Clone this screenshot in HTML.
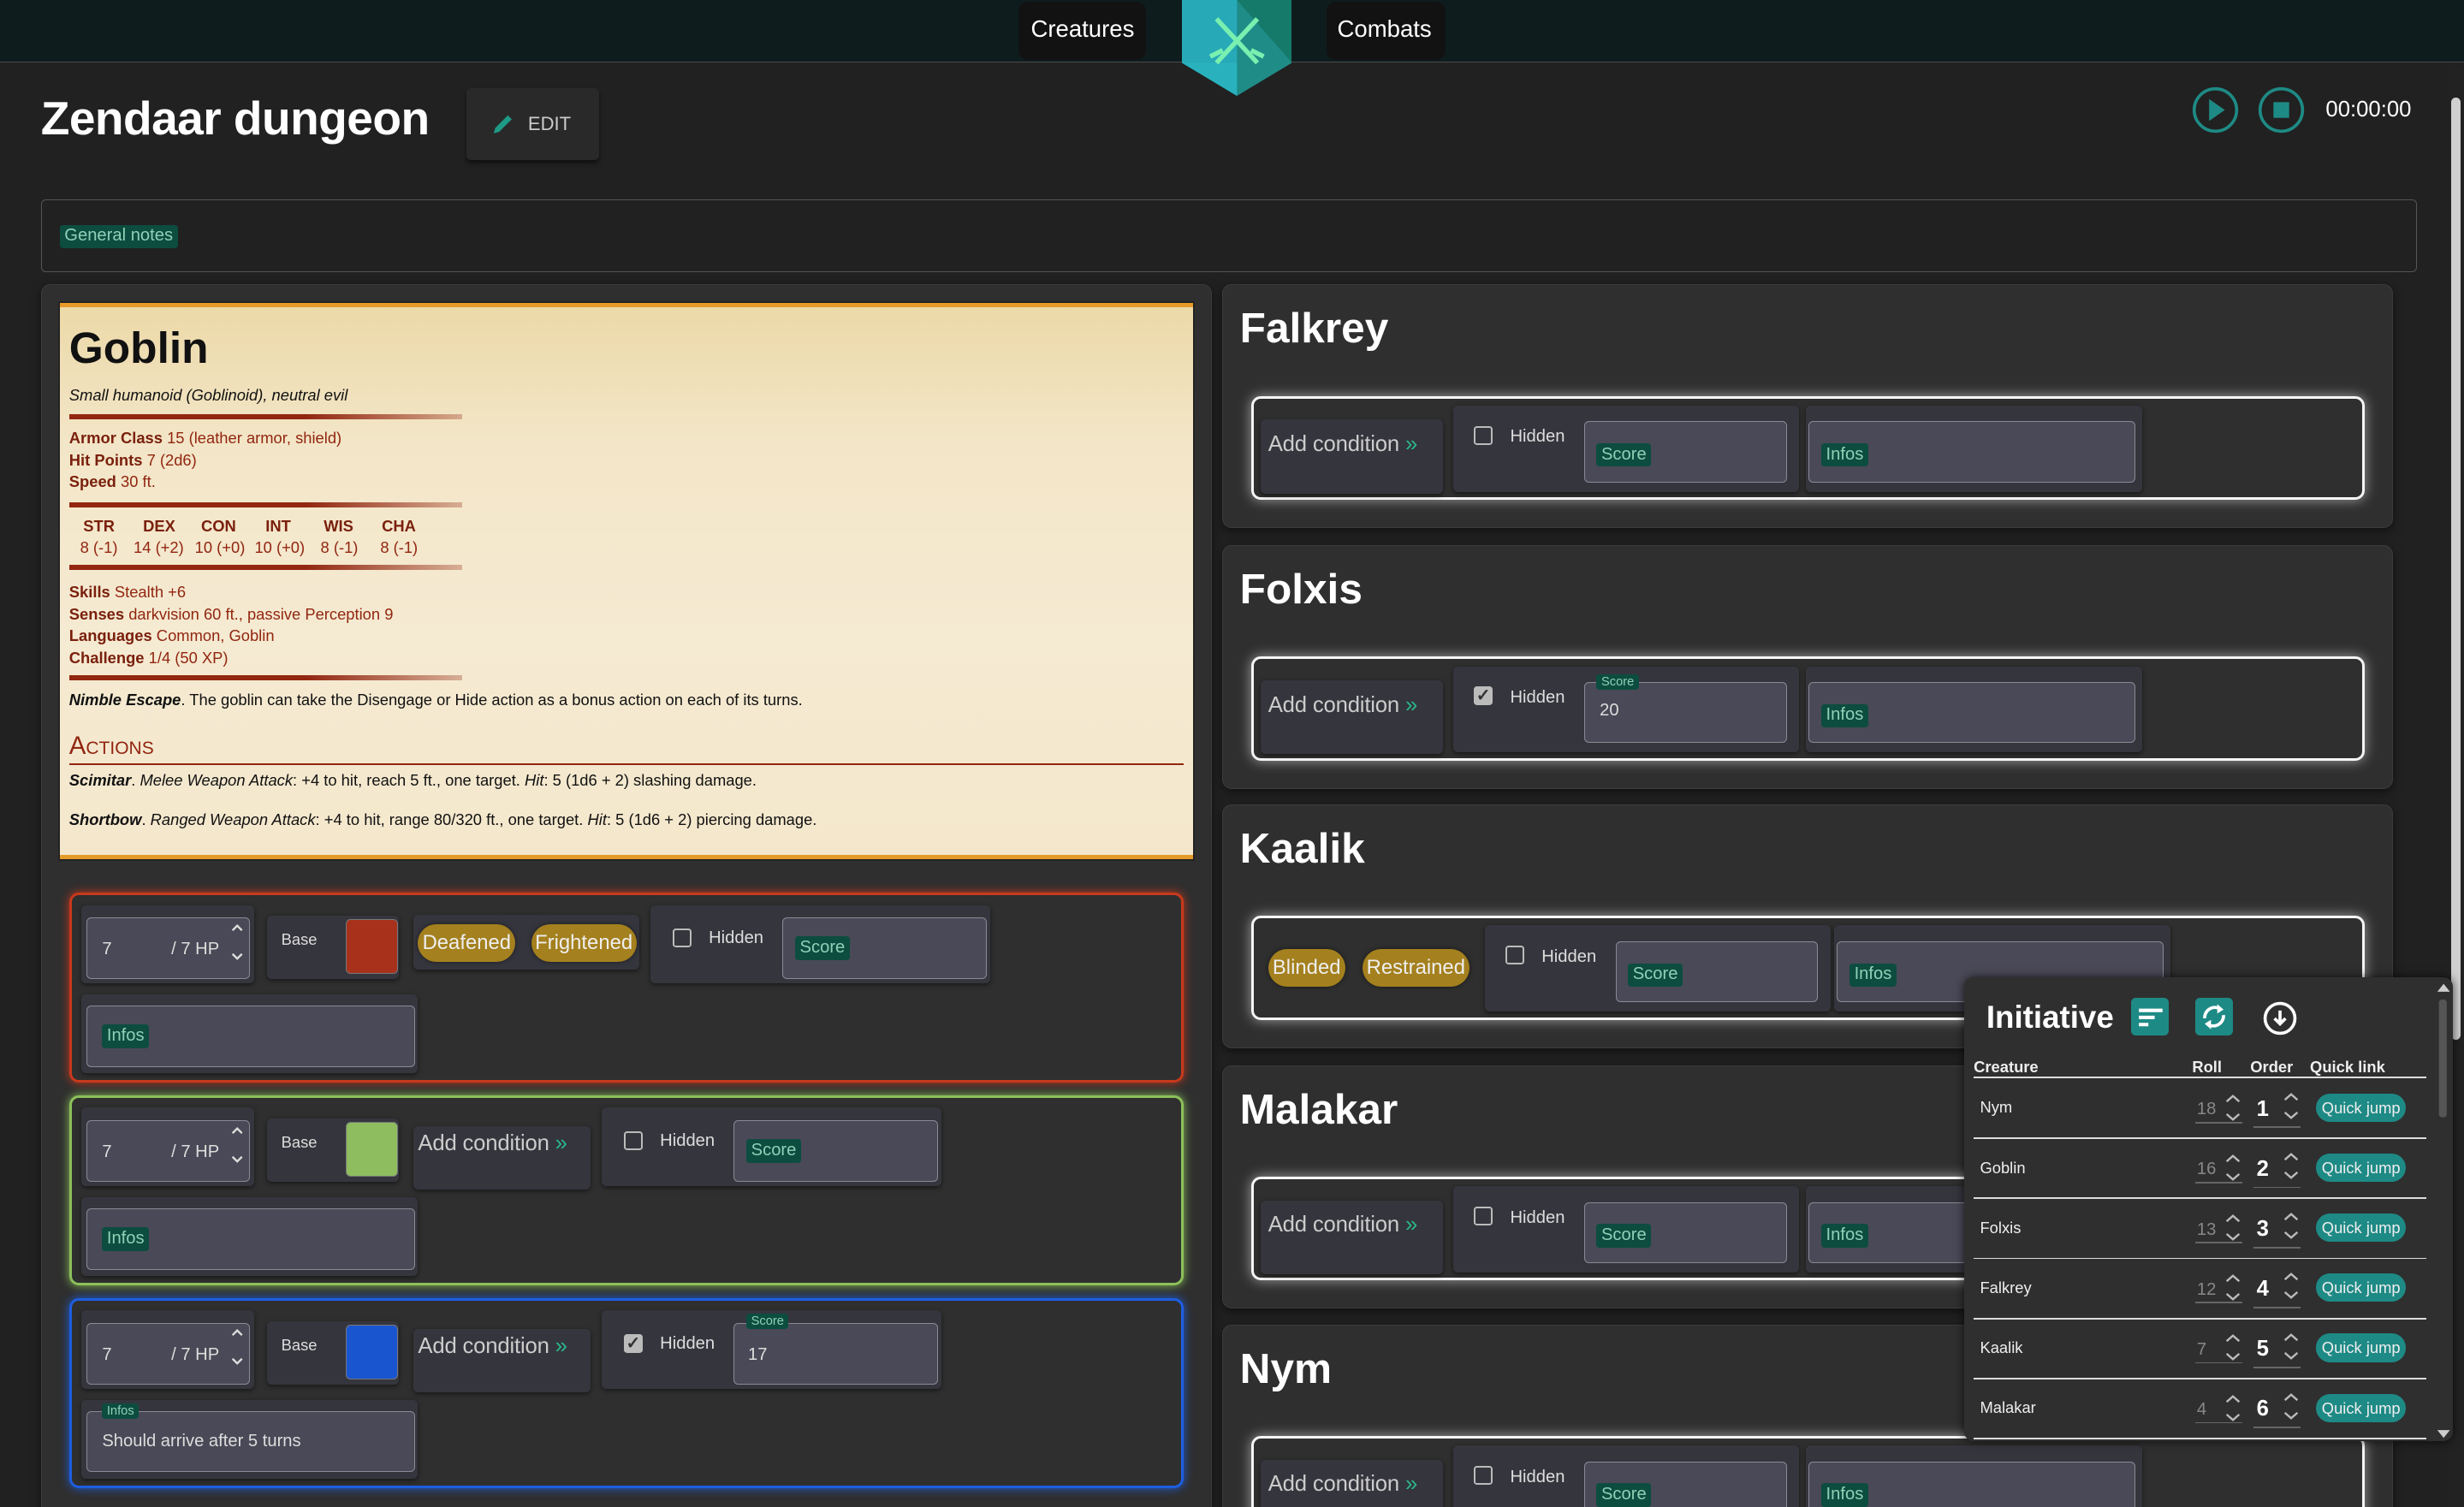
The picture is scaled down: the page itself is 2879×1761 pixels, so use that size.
<!DOCTYPE html>
<html><head><meta charset="utf-8"><style>
*{box-sizing:border-box;margin:0;padding:0}
html,body{width:2879px;height:1761px;overflow:hidden;background:#212121}
#r{position:relative;width:1568px;height:959px;zoom:1.83609;font-family:"Liberation Sans",sans-serif;color:#eee;background:#212121;overflow:hidden}
.a{position:absolute}
.panel{position:absolute;background:#2f2f2f;border:1px solid #3c3c3c;border-radius:6px;box-shadow:0 2px 6px rgba(0,0,0,.5)}
.grp{position:absolute;background:#35353d;border-radius:3px;box-shadow:0 1px 3px rgba(0,0,0,.5)}
.fld{position:absolute;background:#4a4957;border:1px solid #8a8a95;border-radius:3px}
.tag{position:absolute;background:#0c4d3f;color:#8fd0b8;font-size:11px;padding:1px 3px;border-radius:2px;line-height:13px}
.tag.s{font-size:8px;line-height:10px;padding:0 3px}
.cb{position:absolute;width:12px;height:12px;border:1.5px solid #bbb;border-radius:2px}
.cbk{position:absolute;width:12px;height:12px;background:#bbb;border-radius:2px;color:#333;font-size:11px;line-height:12px;text-align:center;font-weight:bold}
.t{position:absolute;white-space:nowrap}
.chip{position:absolute;background:#a4801e;border-radius:12px;color:#eee;font-size:13px;text-align:center;line-height:24px;height:24px;box-shadow:0 0 3px rgba(0,0,0,.5)}
.inner{position:absolute;border:2px solid #f5f5f5;border-radius:6px;box-shadow:0 0 8px rgba(255,255,255,.55)}
.st{font-size:10px;color:#922610;line-height:14px}
.st b{color:#7a200d}
.rule{position:absolute;left:6px;width:250px;height:3px;background:linear-gradient(90deg,#922610,#922610 60%,rgba(146,38,16,.3))}
.qj{position:absolute;left:1474px;width:57px;height:18px;border-radius:9px;background:#1e8a85;color:#eee;font-size:10px;text-align:center;line-height:18px}
.ac{font-size:14px;color:#ccc;font-weight:500;letter-spacing:-0.1px}
</style></head><body><div id="r">

<div class="a" style="left:0;top:0;width:1568px;height:40px;background:#0e1c1e;border-bottom:1px solid #4a4a4a"></div>
<div class="a" style="left:648px;top:1px;width:81px;height:37px;background:#121212;border-radius:6px"></div>
<div class="t" style="left:656px;top:10px;font-size:15px;color:#fff">Creatures</div>
<div class="a" style="left:844px;top:1px;width:76px;height:37px;background:#121212;border-radius:6px"></div>
<div class="t" style="left:851px;top:10px;font-size:15px;color:#fff">Combats</div>
<svg class="a" style="left:752px;top:0" width="70" height="62" viewBox="0 0 70 62">
<polygon points="0,0 70,0 70,40 35,61 0,40" fill="#1f8c88"/>
<polygon points="0,0 35,0 35,61 0,40" fill="#27a9b8"/>
<polygon points="35,0 70,0 70,40" fill="#167a6a"/>
<polygon points="0,40 35,61 35,40" fill="#2bb6c0" opacity=".7"/>
<path d="M22 12 L48 40 M48 12 L22 40 M18 36 l8 -4 M52 36 l-8 -4" stroke="#7af0b0" stroke-width="3"/>
</svg>

<div class="t" style="left:26px;top:58px;font-size:30px;font-weight:bold;color:#fff;letter-spacing:-0.3px">Zendaar dungeon</div>
<div class="a" style="left:297px;top:56px;width:84px;height:46px;background:#292929;border-radius:3px;box-shadow:0 2px 3px rgba(0,0,0,.5)"></div>
<svg class="a" style="left:313px;top:72px" width="14" height="14" viewBox="0 0 14 14"><path d="M1 13 L2 9.5 L10 1.5 L12.5 4 L4.5 12 Z" fill="#1e9a85"/></svg>
<div class="t" style="left:336px;top:72px;font-size:12px;color:#ccc">EDIT</div>
<svg class="a" style="left:1395px;top:55px" width="32" height="32"><circle cx="15" cy="15" r="13.5" fill="none" stroke="#1e8a85" stroke-width="2"/><path d="M11 8 L21 15 L11 22 Z" fill="#1e8a85"/></svg>
<svg class="a" style="left:1437px;top:55px" width="32" height="32"><circle cx="15" cy="15" r="13.5" fill="none" stroke="#1e8a85" stroke-width="2"/><rect x="10" y="10" width="10" height="10" fill="#1e8a85"/></svg>
<div class="t" style="left:1480px;top:62px;font-size:14px;color:#fff">00:00:00</div>
<div class="a" style="left:1558px;top:42px;width:10px;height:917px;background:#222"></div>
<div class="a" style="left:1560px;top:62px;width:6px;height:600px;background:#cfcfcf;border-radius:3px"></div>

<div class="a" style="left:26px;top:127px;width:1512px;height:46px;border:1px solid #555;border-radius:3px"></div>
<div class="tag" style="left:38px;top:143px">General notes</div>

<div class="panel" style="left:26px;top:181px;width:745px;height:790px"></div>
<div class="a" style="left:38px;top:193px;width:721px;height:354px;background:linear-gradient(180deg,#ecd9a8 0%,#f3e6c8 25%,#f5ead2 60%,#f4e7cc 100%);border-top:3px solid #e69a28;border-bottom:3px solid #e69a28;box-shadow:0 0 0 1px #222">
 <div class="t" style="left:6px;top:9px;font-size:28px;font-weight:bold;color:#111">Goblin</div>
 <div class="t" style="left:6px;top:50px;font-size:10px;font-style:italic;color:#111">Small humanoid (Goblinoid), neutral evil</div>
 <div class="rule" style="top:68px"></div>
 <div class="t st" style="left:6px;top:76px"><b>Armor Class</b> 15 (leather armor, shield)</div>
 <div class="t st" style="left:6px;top:90px"><b>Hit Points</b> 7 (2d6)</div>
 <div class="t st" style="left:6px;top:104px"><b>Speed</b> 30 ft.</div>
 <div class="rule" style="top:124px"></div>
 <div class="t st" style="left:15px;top:132px"><b>STR</b></div>
 <div class="t st" style="left:53px;top:132px"><b>DEX</b></div>
 <div class="t st" style="left:90px;top:132px"><b>CON</b></div>
 <div class="t st" style="left:131px;top:132px"><b>INT</b></div>
 <div class="t st" style="left:168px;top:132px"><b>WIS</b></div>
 <div class="t st" style="left:205px;top:132px"><b>CHA</b></div>
 <div class="t st" style="left:13px;top:146px">8 (-1)</div>
 <div class="t st" style="left:47px;top:146px">14 (+2)</div>
 <div class="t st" style="left:86px;top:146px">10 (+0)</div>
 <div class="t st" style="left:124px;top:146px">10 (+0)</div>
 <div class="t st" style="left:166px;top:146px">8 (-1)</div>
 <div class="t st" style="left:204px;top:146px">8 (-1)</div>
 <div class="rule" style="top:164px"></div>
 <div class="t st" style="left:6px;top:174px"><b>Skills</b> Stealth +6</div>
 <div class="t st" style="left:6px;top:188px"><b>Senses</b> darkvision 60 ft., passive Perception 9</div>
 <div class="t st" style="left:6px;top:202px"><b>Languages</b> Common, Goblin</div>
 <div class="t st" style="left:6px;top:216px"><b>Challenge</b> 1/4 (50 XP)</div>
 <div class="rule" style="top:234px"></div>
 <div class="t" style="left:6px;top:244px;font-size:10px;color:#111"><b><i>Nimble Escape</i></b>. The goblin can take the Disengage or Hide action as a bonus action on each of its turns.</div>
 <div class="t" style="left:6px;top:270px;font-size:16px;color:#922610;font-variant:small-caps">Actions</div>
 <div class="a" style="left:6px;top:290px;width:709px;height:1px;background:#922610"></div>
 <div class="t" style="left:6px;top:295px;font-size:10px;color:#111"><b><i>Scimitar</i></b>. <i>Melee Weapon Attack</i>: +4 to hit, reach 5 ft., one target. <i>Hit</i>: 5 (1d6 + 2) slashing damage.</div>
 <div class="t" style="left:6px;top:320px;font-size:10px;color:#111"><b><i>Shortbow</i></b>. <i>Ranged Weapon Attack</i>: +4 to hit, range 80/320 ft., one target. <i>Hit</i>: 5 (1d6 + 2) piercing damage.</div>
</div>

<div id="cards"></div>
<div id="right"></div>

<div class="a" style="left:1250px;top:622px;width:311px;height:295px;background:#2f2f2f;border-radius:6px;box-shadow:0 0 6px rgba(0,0,0,.7)">
 <div class="t" style="left:14px;top:14px;font-size:20px;font-weight:bold;color:#fff">Initiative</div>
 <div class="a" style="left:106px;top:13px;width:24px;height:24px;background:#1e8a85;border-radius:3px"></div>
 <svg class="a" style="left:106px;top:13px" width="24" height="24"><path d="M5 8h15M5 12.5h10M5 17h6" stroke="#fff" stroke-width="2.2"/></svg>
 <div class="a" style="left:147px;top:13px;width:24px;height:24px;background:#1e8a85;border-radius:3px"></div>
 <svg class="a" style="left:147px;top:13px" width="24" height="24" viewBox="0 0 24 24"><path d="M6 13 A6.5 6.5 0 0 1 16.5 7.5" fill="none" stroke="#fff" stroke-width="2"/><path d="M14 4 L18 7.5 L14 10 Z" fill="#fff"/><path d="M18 11 A6.5 6.5 0 0 1 7.5 16.5" fill="none" stroke="#fff" stroke-width="2"/><path d="M10 20 L6 16.5 L10 14 Z" fill="#fff"/></svg>
 <svg class="a" style="left:189px;top:14px" width="24" height="24"><circle cx="12" cy="12" r="9.5" fill="none" stroke="#fff" stroke-width="2"/><path d="M12 7v8M8.5 12l3.5 3.5 3.5-3.5" stroke="#fff" stroke-width="2" fill="none"/></svg>
 <div class="t" style="left:6px;top:51px;font-size:10px;font-weight:bold">Creature</div>
 <div class="t" style="left:145px;top:51px;font-size:10px;font-weight:bold">Roll</div>
 <div class="t" style="left:182px;top:51px;font-size:10px;font-weight:bold">Order</div>
 <div class="t" style="left:220px;top:51px;font-size:10px;font-weight:bold">Quick link</div>
 <div class="a" style="left:6px;top:63px;width:288px;height:1px;background:#ddd"></div>
 <svg class="a" style="left:300px;top:2px" width="10" height="292"><path d="M1 7 L5 2 L9 7Z M1 286 L5 291 L9 286Z" fill="#ccc"/><rect x="2" y="12" width="5" height="75" rx="2" fill="#555"/></svg>
</div>
<div id="init"></div>

<script>
var h='';
function card(top,col,opt){
 var s='<div class="a" style="left:44px;top:'+top+'px;width:709px;height:121px;border:2px solid '+col+';border-radius:6px;box-shadow:0 0 6px '+col+'"></div>';
 var y=top+8;
 s+='<div class="grp" style="left:52px;top:'+y+'px;width:110px;height:50px"></div>';
 s+='<div class="fld" style="left:55px;top:'+(y+8)+'px;width:104px;height:39px"></div>';
 s+='<div class="t" style="left:65px;top:'+(y+22)+'px;font-size:11px;color:#ddd">7</div>';
 s+='<div class="t" style="left:109px;top:'+(y+22)+'px;font-size:11px;color:#ddd">/ 7 HP</div>';
 s+='<svg class="a" style="left:146px;top:'+(y+11)+'px" width="10" height="26"><path d="M2 5 L5 2 L8 5 M2 20 L5 23 L8 20" stroke="#ddd" stroke-width="1.3" fill="none"/></svg>';
 s+='<div class="grp" style="left:170px;top:'+(y+7)+'px;width:84px;height:40px"></div>';
 s+='<div class="t" style="left:179px;top:'+(y+16)+'px;font-size:10px;color:#ddd">Base</div>';
 s+='<div class="a" style="left:220px;top:'+(y+9)+'px;width:33px;height:35px;background:'+opt.sw+';border-radius:3px;border:1px solid #777"></div>';
 var hx;
 if(opt.chips){
  s+='<div class="grp" style="left:263px;top:'+(y+6)+'px;width:144px;height:35px"></div>';
  s+='<div class="chip" style="left:266px;top:'+(y+12)+'px;width:62px">Deafened</div>';
  s+='<div class="chip" style="left:338px;top:'+(y+12)+'px;width:67px">Frightened</div>';
  hx=414;
 } else {
  s+='<div class="grp" style="left:263px;top:'+(y+12)+'px;width:113px;height:40px"></div>';
  s+='<div class="t ac" style="left:266px;top:'+(y+15)+'px">Add condition <span style="color:#2ab88a">&raquo;</span></div>';
  hx=383;
 }
 s+='<div class="grp" style="left:'+hx+'px;top:'+y+'px;width:216px;height:50px"></div>';
 s+=(opt.hidden?'<div class="cbk" style="left:'+(hx+14)+'px;top:'+(y+15)+'px">&#10003;</div>':'<div class="cb" style="left:'+(hx+14)+'px;top:'+(y+15)+'px"></div>');
 s+='<div class="t" style="left:'+(hx+37)+'px;top:'+(y+15)+'px;font-size:11px;color:#ddd">Hidden</div>';
 s+='<div class="fld" style="left:'+(hx+84)+'px;top:'+(y+8)+'px;width:130px;height:39px"></div>';
 if(opt.score){s+='<div class="tag s" style="left:'+(hx+92)+'px;top:'+(y+2)+'px">Score</div><div class="t" style="left:'+(hx+93)+'px;top:'+(y+22)+'px;font-size:11px;color:#ddd">'+opt.score+'</div>';}
 else s+='<div class="tag" style="left:'+(hx+92)+'px;top:'+(y+20)+'px">Score</div>';
 var y2=top+65;
 s+='<div class="grp" style="left:52px;top:'+y2+'px;width:214px;height:50px"></div>';
 s+='<div class="fld" style="left:55px;top:'+(y2+7)+'px;width:209px;height:39px"></div>';
 if(opt.info){s+='<div class="tag s" style="left:65px;top:'+(y2+2)+'px">Infos</div><div class="t" style="left:65px;top:'+(y2+20)+'px;font-size:11px;color:#ddd">'+opt.info+'</div>';}
 else s+='<div class="tag" style="left:65px;top:'+(y2+19)+'px">Infos</div>';
 return s;
}
h+=card(568,'#c8391c',{sw:'#a8311b',chips:1});
h+=card(697,'#8cc05a',{sw:'#8dbd5e'});
h+=card(826,'#1e5ee0',{sw:'#1a55d0',hidden:1,score:'17',info:'Should arrive after 5 turns'});
document.getElementById('cards').innerHTML=h;

var r='';
var names=[['Falkrey',181],['Folxis',347],['Kaalik',512],['Malakar',678],['Nym',843]];
names.forEach(function(n,i){
 var t=n[1];
 r+='<div class="panel" style="left:778px;top:'+t+'px;width:745px;height:155px"></div>';
 r+='<div class="t" style="left:789px;top:'+(t+12)+'px;font-size:27px;font-weight:bold;color:#fff">'+n[0]+'</div>';
 r+='<div class="inner" style="left:796px;top:'+(t+71)+'px;width:709px;height:66px"></div>';
 var y=t+77,hx,ix;
 if(i==2){
  r+='<div class="chip" style="left:807px;top:'+(y+15)+'px;width:49px">Blinded</div>';
  r+='<div class="chip" style="left:867px;top:'+(y+15)+'px;width:68px">Restrained</div>';
  hx=945;ix=1167;
 } else {
  r+='<div class="grp" style="left:802px;top:'+(y+9)+'px;width:116px;height:47px"></div>';
  r+='<div class="t ac" style="left:807px;top:'+(y+17)+'px">Add condition <span style="color:#2ab88a">&raquo;</span></div>';
  hx=925;ix=1149;
 }
 r+='<div class="grp" style="left:'+hx+'px;top:'+y+'px;width:220px;height:55px"></div>';
 r+=(i==1?'<div class="cbk" style="left:'+(hx+13)+'px;top:'+(y+13)+'px">&#10003;</div>':'<div class="cb" style="left:'+(hx+13)+'px;top:'+(y+13)+'px"></div>');
 r+='<div class="t" style="left:'+(hx+36)+'px;top:'+(y+14)+'px;font-size:11px;color:#ddd">Hidden</div>';
 r+='<div class="fld" style="left:'+(hx+83)+'px;top:'+(y+10)+'px;width:129px;height:39px"></div>';
 if(i==1) r+='<div class="tag s" style="left:'+(hx+91)+'px;top:'+(y+5)+'px">Score</div><div class="t" style="left:'+(hx+93)+'px;top:'+(y+22)+'px;font-size:11px;color:#ddd">20</div>';
 else r+='<div class="tag" style="left:'+(hx+91)+'px;top:'+(y+24)+'px">Score</div>';
 r+='<div class="grp" style="left:'+ix+'px;top:'+y+'px;width:214px;height:55px"></div>';
 r+='<div class="fld" style="left:'+(ix+2)+'px;top:'+(y+10)+'px;width:208px;height:39px"></div>';
 r+='<div class="tag" style="left:'+(ix+10)+'px;top:'+(y+24)+'px">Infos</div>';
});
document.getElementById('right').innerHTML=r;

var q='';
[['Nym',18,1],['Goblin',16,2],['Folxis',13,3],['Falkrey',12,4],['Kaalik',7,5],['Malakar',4,6]].forEach(function(a,i){
 var c=705+i*38.2;
 q+='<div class="t" style="left:1260px;top:'+(c-6)+'px;font-size:10px;color:#eee">'+a[0]+'</div>';
 q+='<div class="t" style="left:1398px;top:'+(c-5)+'px;font-size:11px;color:#888">'+a[1]+'</div>';
 q+='<svg class="a" style="left:1415px;top:'+(c-9)+'px" width="12" height="20"><path d="M2 5 L6 1.5 L10 5 M2 13 L6 16.5 L10 13" stroke="#bbb" stroke-width="1.3" fill="none"/></svg>';
 q+='<div class="a" style="left:1397px;top:'+(c+9)+'px;width:30px;height:1px;background:#666"></div>';
 q+='<div class="t" style="left:1436px;top:'+(c-7)+'px;font-size:14px;font-weight:bold;color:#fff">'+a[2]+'</div>';
 q+='<svg class="a" style="left:1452px;top:'+(c-10)+'px" width="12" height="20"><path d="M2 5 L6 1.5 L10 5 M2 13 L6 16.5 L10 13" stroke="#bbb" stroke-width="1.3" fill="none"/></svg>';
 q+='<div class="a" style="left:1434px;top:'+(c+12)+'px;width:30px;height:1px;background:#666"></div>';
 q+='<div class="qj" style="top:'+(c-9)+'px">Quick jump</div>';
 q+='<div class="a" style="left:1256px;top:'+(c+19)+'px;width:288px;height:1px;background:#ddd"></div>';
});
document.getElementById('init').innerHTML=q;
</script>
</div></body></html>
